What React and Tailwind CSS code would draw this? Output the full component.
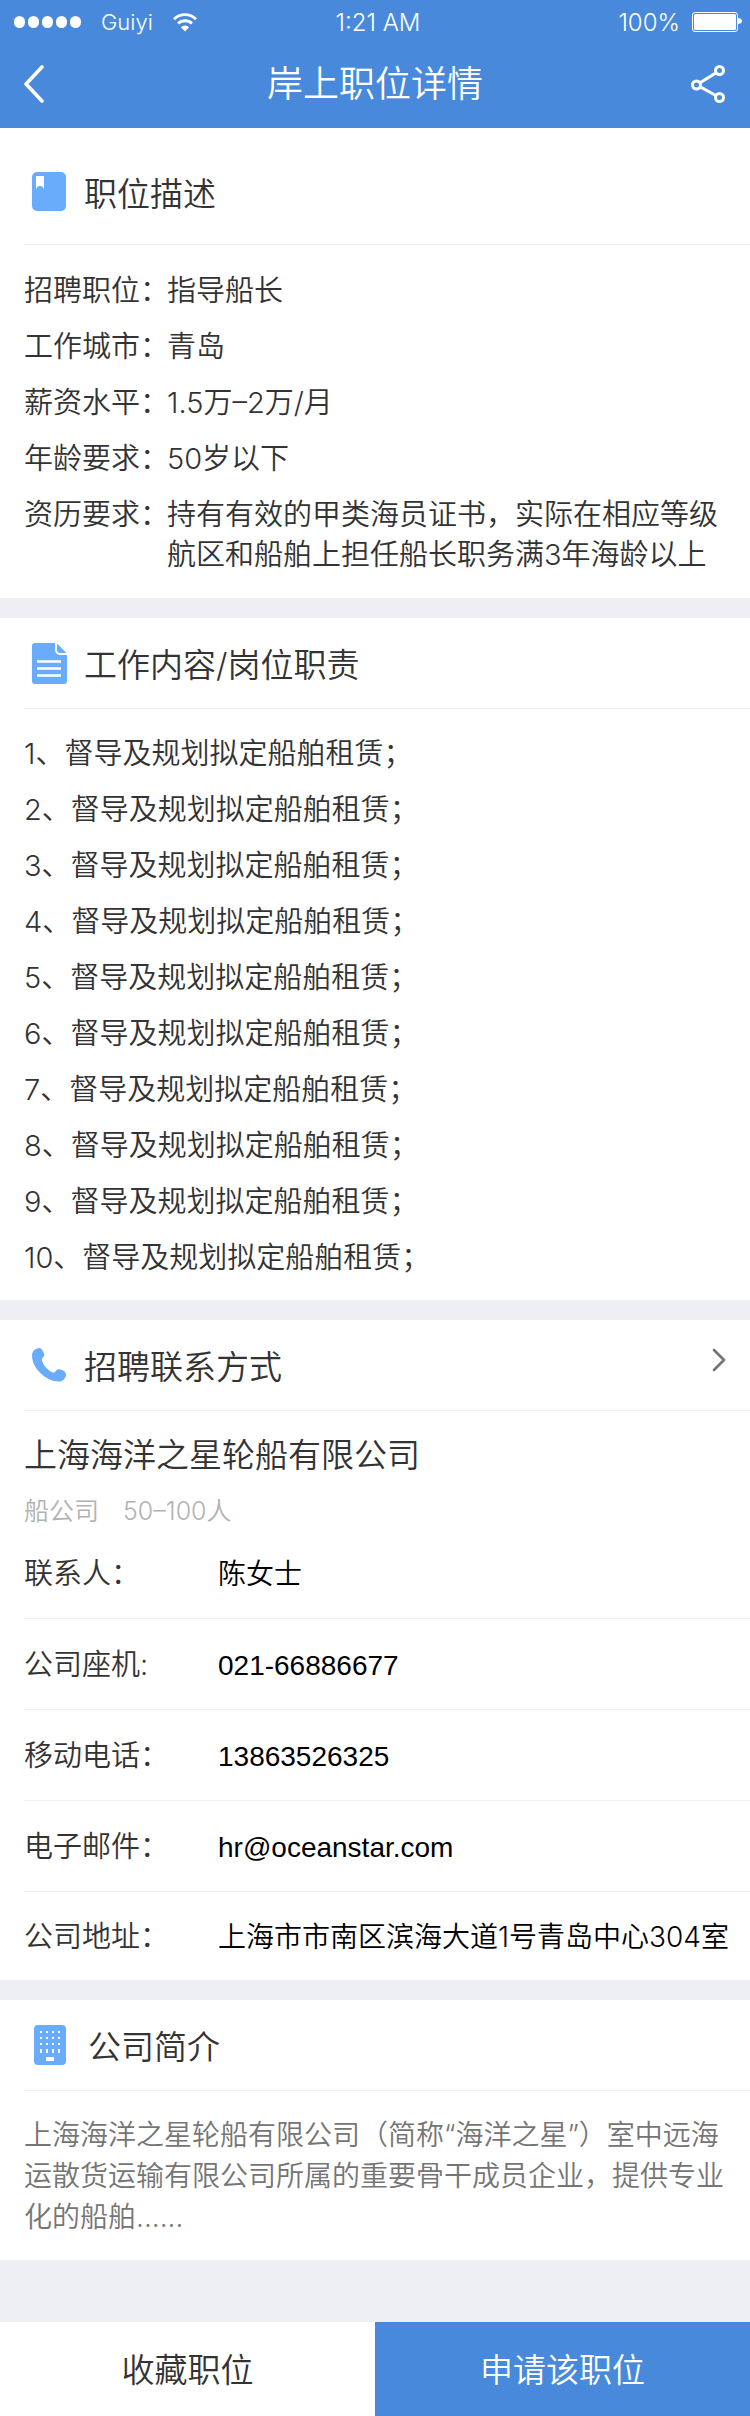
const ui = "font-['Inter','Noto_Sans_CJK_SC',sans-serif]";
const latin = "font-['Liberation_Sans','Noto_Sans_CJK_SC',sans-serif]";

const jobFields = [
  ['招聘职位：', '指导船长'],
  ['工作城市：', '青岛'],
  ['薪资水平：', '1.5万–2万/月'],
  ['年龄要求：', '50岁以下'],
  ['资历要求：', '持有有效的甲类海员证书，实际在相应等级航区和船舶上担任船长职务满3年海龄以上'],
];

const duties = Array.from({ length: 10 }, (_, i) => `${i + 1}、督导及规划拟定船舶租赁；`);

const contacts = [
  { label: '联系人：', value: '陈女士' },
  { label: '公司座机:', value: '021-66886677', href: 'tel:02166886677' },
  { label: '移动电话：', value: '13863526325', href: 'tel:13863526325' },
  { label: '电子邮件：', value: 'hr@oceanstar.com', href: 'mailto:hr@oceanstar.com' },
  { label: '公司地址：', value: '上海市市南区滨海大道1号青岛中心304室' },
];

function WifiIcon() {
  return (
    <svg width="24" height="19" viewBox="0 0 24 19" fill="none" stroke="#fff" strokeWidth="2.8" aria-hidden="true">
      <path d="M1 6.2a15.6 15.6 0 0 1 22 0" />
      <path d="M5 10.6a10 10 0 0 1 14 0" />
      <path d="M12 18.6 7.9 14.2a5.8 5.8 0 0 1 8.2 0Z" fill="#fff" stroke="none" />
    </svg>
  );
}

function BatteryIcon() {
  return (
    <svg width="50" height="20" viewBox="0 0 50 20" aria-hidden="true">
      <rect x="0.5" y="0.5" width="45" height="19" rx="2.5" fill="none" stroke="#fff" />
      <rect x="2" y="2" width="42" height="16" rx="1.5" fill="#fff" />
      <path d="M46 6c2 0 4 1.200 4 3s-2 3-4 3Z" fill="#fff" />
    </svg>
  );
}

function BackIcon() {
  return (
    <svg width="20" height="38" viewBox="0 0 20 38" fill="none" stroke="#fff" strokeWidth="3.6" strokeLinecap="round" strokeLinejoin="round" aria-hidden="true">
      <path d="M18 2 2 19l16 17" />
    </svg>
  );
}

function ShareIcon() {
  return (
    <svg width="34" height="38" viewBox="0 0 34 38" fill="none" stroke="#fff" strokeWidth="3" aria-hidden="true">
      <circle cx="5.500" cy="20" r="4" />
      <circle cx="28.500" cy="5.500" r="4" />
      <circle cx="28.500" cy="32.500" r="4" />
      <path d="M9 17.800 25 7.900M9.200 21.900 24.900 30.500" />
    </svg>
  );
}

function BookmarkIcon() {
  return (
    <svg width="36" height="40" viewBox="0 0 36 40" aria-hidden="true">
      <rect y="0" width="34" height="39" rx="5" fill="#68acfb" />
      <path d="M4 4h8v13.500C11.600 15 10 14 8 14s-3.600 1-4 3.500Z" fill="#fff" />
    </svg>
  );
}

function DocumentIcon() {
  return (
    <svg width="36" height="41" viewBox="0 0 36 41" aria-hidden="true">
      <path d="M3 0h20v7a5 5 0 0 0 5 5h7v26a3 3 0 0 1-3 3H3a3 3 0 0 1-3-3V3a3 3 0 0 1 3-3Z" fill="#68acfb" />
      <path d="M25 .5 34.500 10H28a3 3 0 0 1-3-3Z" fill="#68acfb" />
      <path d="M5 18.500h24M5 25.500h24M5 32.500h24" stroke="#fff" strokeWidth="2.400" />
    </svg>
  );
}

function PhoneIcon() {
  return (
    <svg width="36" height="34" viewBox="0 0 36 34" aria-hidden="true">
      <path
        d="M6 .2C8.500-.4 9.500.6 10.500 2.500 12 5 13 6.500 11.800 8.500 11 9.800 9.500 10.200 9.800 12c.7 4.500 6.500 11 11 12.600 1.700.6 2.300-1 3.500-2.200 1.700-1.700 3.700-1.400 6-.2 2.500 1.300 4.200 2.600 3.700 5-.7 3.600-3.300 6.200-7 6.300C14.500 33.700 0 20.500 0 7.500 0 3.600 2.500 1 6 .2Z"
        fill="#68acfb"
      />
    </svg>
  );
}

function BuildingIcon() {
  const columns = [8, 14, 20, 26];
  return (
    <svg width="40" height="40" viewBox="0 0 40 40" aria-hidden="true">
      <rect x="2" width="32" height="40" rx="4" fill="#68acfb" />
      {columns.map((x) => (
        <g key={x} fill="#fff">
          <rect x={x} y="6" width="2" height="2" />
          <rect x={x} y="12" width="2" height="2" />
          <rect x={x} y="18" width="2" height="2" />
          <rect x={x} y="24" width="2" height="4" />
        </g>
      ))}
      <rect x="14" y="32" width="8" height="4" fill="#fff" />
    </svg>
  );
}

function ChevronIcon() {
  return (
    <svg width="14" height="24" viewBox="0 0 14 24" fill="none" stroke="#757575" strokeWidth="2.800" strokeLinecap="round" strokeLinejoin="round" aria-hidden="true">
      <path d="M2 2 12 12 2 22" />
    </svg>
  );
}

function SectionTitle({ icon, children, action, size = 'h-[91px]' }) {
  return (
    <div className={`ml-6 flex items-center gap-4 border-b border-[#f1f1f3] pr-6 pl-2 ${size}`}>
      {icon}
      <h2 className="flex-1 pt-1 text-[33px] leading-10">{children}</h2>
      {action}
    </div>
  );
}

export default function App() {
  return (
    <div lang="zh-CN" className={`flex flex-col bg-[#eeeff5] text-[29px] leading-10 font-[350] text-[#333] ${ui}`}>
      <header className="bg-[#4889db] text-white">
        <div className="grid h-10 grid-cols-3 items-center pt-1 pr-2 pl-3.5 text-[24px] leading-7 font-light">
          <div className="flex items-center">
            <div className="flex gap-[3px]" aria-hidden="true">
              {[0, 1, 2, 3, 4].map((n) => (
                <span key={n} className="h-3 w-[11px] rounded-full bg-white" />
              ))}
            </div>
            <span className="mx-5 text-[22px]">Guiyi</span>
            <WifiIcon />
          </div>
          <span className="pt-0.5 text-center">1:21 AM</span>
          <div className="flex items-center justify-end gap-3">
            <span className="pt-0.5">100%</span>
            <BatteryIcon />
          </div>
        </div>
        <div className="flex h-22 items-center justify-between px-6">
          <button type="button" aria-label="返回" className="w-9">
            <BackIcon />
          </button>
          <h1 className="text-[36px] leading-10">岸上职位详情</h1>
          <button type="button" aria-label="分享" className="flex w-9 justify-center">
            <ShareIcon />
          </button>
        </div>
      </header>

      <main className="flex flex-col gap-5">
        <section className="bg-white">
          <SectionTitle icon={<BookmarkIcon />} size="h-[117px] pt-3">
            职位描述
          </SectionTitle>
          <dl className="flex flex-col gap-4 px-6 pt-[26px] pb-[23px]">
            {jobFields.map(([label, value]) => (
              <div key={label} className="flex">
                <dt className="w-[143px] shrink-0 whitespace-nowrap">{label}</dt>
                <dd className="flex-1">{value}</dd>
              </div>
            ))}
          </dl>
        </section>

        <section className="bg-white">
          <SectionTitle icon={<DocumentIcon />}>工作内容/岗位职责</SectionTitle>
          <ol className="flex flex-col gap-4 px-6 pt-[25px] pb-[22px]">
            {duties.map((duty) => (
              <li key={duty}>{duty}</li>
            ))}
          </ol>
        </section>

        <section className="bg-white">
          <SectionTitle
            icon={<PhoneIcon />}
            action={
              <button type="button" aria-label="查看联系方式" className="mb-2.5">
                <ChevronIcon />
              </button>
            }
          >
            招聘联系方式
          </SectionTitle>
          <h3 className="px-6 pt-6 text-[33px] leading-10">上海海洋之星轮船有限公司</h3>
          <p className="flex gap-6 px-6 pt-5 text-[25px] leading-8 text-[#b2b2b2]">
            <span>船公司</span>
            <span>50–100人</span>
          </p>
          <dl className="pt-px pl-6">
            {contacts.map(({ label, value, href }) => (
              <div key={label} className="flex h-[91px] items-center border-b border-[#f1f1f3] pt-0.5 last:h-[88px] last:border-b-0">
                <dt className="w-[194px] shrink-0">{label}</dt>
                <dd className="text-[28px] whitespace-nowrap text-black">
                  {href ? (
                    <a href={href} className={`${latin} font-normal`}>
                      {value}
                    </a>
                  ) : (
                    value
                  )}
                </dd>
              </div>
            ))}
          </dl>
        </section>

        <section className="bg-white">
          <SectionTitle icon={<BuildingIcon />}>公司简介</SectionTitle>
          <p className="px-6 pt-6 pb-[22px] text-[28px] leading-[41px] text-[#757575]">
            上海海洋之星轮船有限公司（简称“海洋之星”）室中远海运散货运输有限公司所属的重要骨干成员企业，提供专业化的船舶......
          </p>
        </section>
      </main>

      <footer className="mt-[62px] grid h-[94px] grid-cols-2 text-[33px]">
        <button type="button" className="bg-white pt-0.5">
          收藏职位
        </button>
        <button type="button" className="bg-[#4889db] pt-0.5 text-white">
          申请该职位
        </button>
      </footer>
    </div>
  );
}
